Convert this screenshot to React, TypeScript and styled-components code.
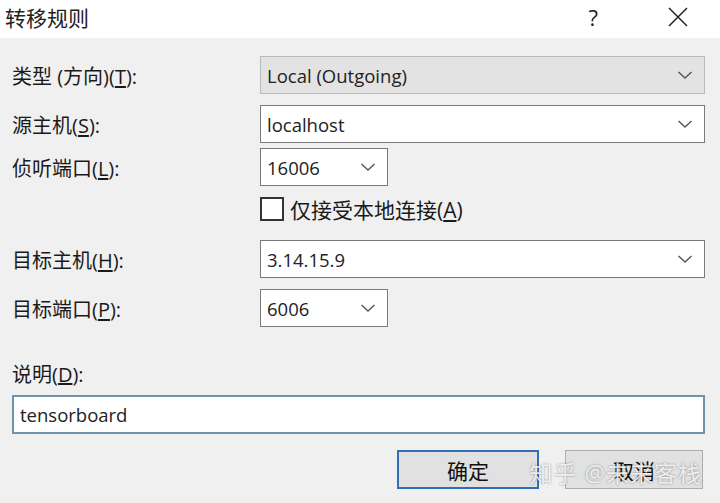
import styled, { createGlobalStyle } from 'styled-components';

const GlobalStyle = createGlobalStyle`
	html, body {
		margin: 0;
		padding: 0;
		background: #f0f0f0;
	}
	body {
		font-family: "Open Sans", "Noto Sans CJK SC", sans-serif;
		color: #1a1a1a;
	}
`;

const Chevron = () => (
	<svg width="16" height="10" viewBox="0 0 16 10">
		<path d="M1.5 2 L8 8 L14.5 2" fill="none" stroke="#555" strokeWidth="1.4" />
	</svg>
);

interface ISelectProps {
	value: string;
	narrow?: boolean;
	disabled?: boolean;
}
const Select = ({ value, narrow, disabled }: ISelectProps) => (
	<SelectBox $narrow={narrow} $disabled={disabled}>
		<SelectValue>{value}</SelectValue>
		<Chevron />
	</SelectBox>
);

interface IRowProps {
	label: React.ReactNode;
	children: React.ReactNode;
	gap: number;
}
const Row = ({ label, children, gap }: IRowProps) => (
	<FieldRow $gap={gap}>
		<Label>{label}</Label>
		{children}
	</FieldRow>
);

const App = () => (
	<Window>
		<GlobalStyle />
		<TitleBar>
			<Title>转移规则</Title>
			<TitleButtons>
				<HelpMark>?</HelpMark>
				<svg width="22" height="22" viewBox="0 0 22 22">
					<path d="M2 2 L20 20 M20 2 L2 20" stroke="#222" strokeWidth="1.5" />
				</svg>
			</TitleButtons>
		</TitleBar>
		<Body>
			<Row gap={18} label={<>类型 (方向)(<u>T</u>):</>}>
				<Select value="Local (Outgoing)" disabled />
			</Row>
			<Row gap={11} label={<>源主机(<u>S</u>):</>}>
				<Select value="localhost" />
			</Row>
			<Row gap={5} label={<>侦听端口(<u>L</u>):</>}>
				<Select value="16006" narrow />
			</Row>
			<CheckRow>
				<CheckBox />
				<span>仅接受本地连接(<u>A</u>)</span>
			</CheckRow>
			<Row gap={19} label={<>目标主机(<u>H</u>):</>}>
				<Select value="3.14.15.9" />
			</Row>
			<Row gap={11} label={<>目标端口(<u>P</u>):</>}>
				<Select value="6006" narrow />
			</Row>
			<DescLabel>说明(<u>D</u>):</DescLabel>
			<TextInput>tensorboard</TextInput>
			<ButtonBar>
				<DialogButton $primary>确定</DialogButton>
				<DialogButton>取消</DialogButton>
				<Watermark>知乎 @未来客栈</Watermark>
			</ButtonBar>
		</Body>
	</Window>
);

export default App;

const Window = styled.div`
	width: 720px;
	height: 503px;
	overflow: hidden;
	background: #f0f0f0;
	display: flex;
	flex-direction: column;
`;

const TitleBar = styled.div`
	height: 38px;
	background: #fff;
	display: flex;
	align-items: center;
	justify-content: space-between;
	padding: 0 31px 4px 5px;
	box-sizing: border-box;
`;

const Title = styled.span`
	font-size: 21px;
	color: #222;
`;

const TitleButtons = styled.div`
	display: flex;
	align-items: center;
	gap: 69px;
`;

const HelpMark = styled.span`
	font-size: 22px;
	color: #222;
`;

const Body = styled.div`
	padding: 0 15px 0 12px;
	display: flex;
	flex-direction: column;
`;

const FieldRow = styled.div<{ $gap: number }>`
	margin-top: ${({ $gap }) => $gap}px;
	display: grid;
	grid-template-columns: 248px 1fr;
	align-items: center;
`;

const Label = styled.span`
	font-size: 20px;
	u {
		text-underline-offset: 2px;
	}
`;

const SelectBox = styled.div<{ $narrow?: boolean; $disabled?: boolean }>`
	height: 38px;
	box-sizing: border-box;
	width: ${({ $narrow }) => ($narrow ? '128px' : '445px')};
	background: ${({ $disabled }) => ($disabled ? '#e3e3e3' : '#fff')};
	border: 1.5px solid ${({ $disabled }) => ($disabled ? '#b9b9b9' : '#7a7a7a')};
	display: flex;
	align-items: center;
	justify-content: space-between;
	padding: 0 11px 0 6px;
`;

const SelectValue = styled.span`
	font-size: 18.5px;
	color: #222;
`;

const CheckRow = styled.label`
	margin-top: 11px;
	margin-left: 248px;
	display: flex;
	align-items: center;
	gap: 6px;
	font-size: 21px;
	height: 24px;
`;

const CheckBox = styled.span`
	width: 24px;
	height: 24px;
	box-sizing: border-box;
	border: 2px solid #333;
	background: #fff;
`;

const DescLabel = styled.span`
	margin-top: 32px;
	font-size: 20px;
`;

const TextInput = styled.div`
	margin-top: 7px;
	height: 39px;
	box-sizing: border-box;
	border: 2px solid #6f93ad;
	background: #fff;
	display: flex;
	align-items: center;
	padding: 0 6px;
	font-size: 18.5px;
	color: #222;
`;

const ButtonBar = styled.div`
	margin-top: 16px;
	display: flex;
	justify-content: flex-end;
	gap: 26px;
	padding-right: 2px;
	position: relative;
`;

const DialogButton = styled.button<{ $primary?: boolean }>`
	width: ${({ $primary }) => ($primary ? '142px' : '138px')};
	height: 39px;
	box-sizing: border-box;
	background: #e1e1e1;
	border: ${({ $primary }) => ($primary ? '2.5px solid #2f6fb7' : '1.5px solid #adadad')};
	font-family: inherit;
	font-size: 21px;
	color: #111;
	padding: 0;
`;

const Watermark = styled.span`
	position: absolute;
	right: 3px;
	top: 5px;
	font-size: 23px;
	color: rgba(255, 255, 255, 0.85);
	text-shadow: 0 0 2px rgba(0, 0, 0, 0.45);
	letter-spacing: 1px;
	pointer-events: none;
`;
